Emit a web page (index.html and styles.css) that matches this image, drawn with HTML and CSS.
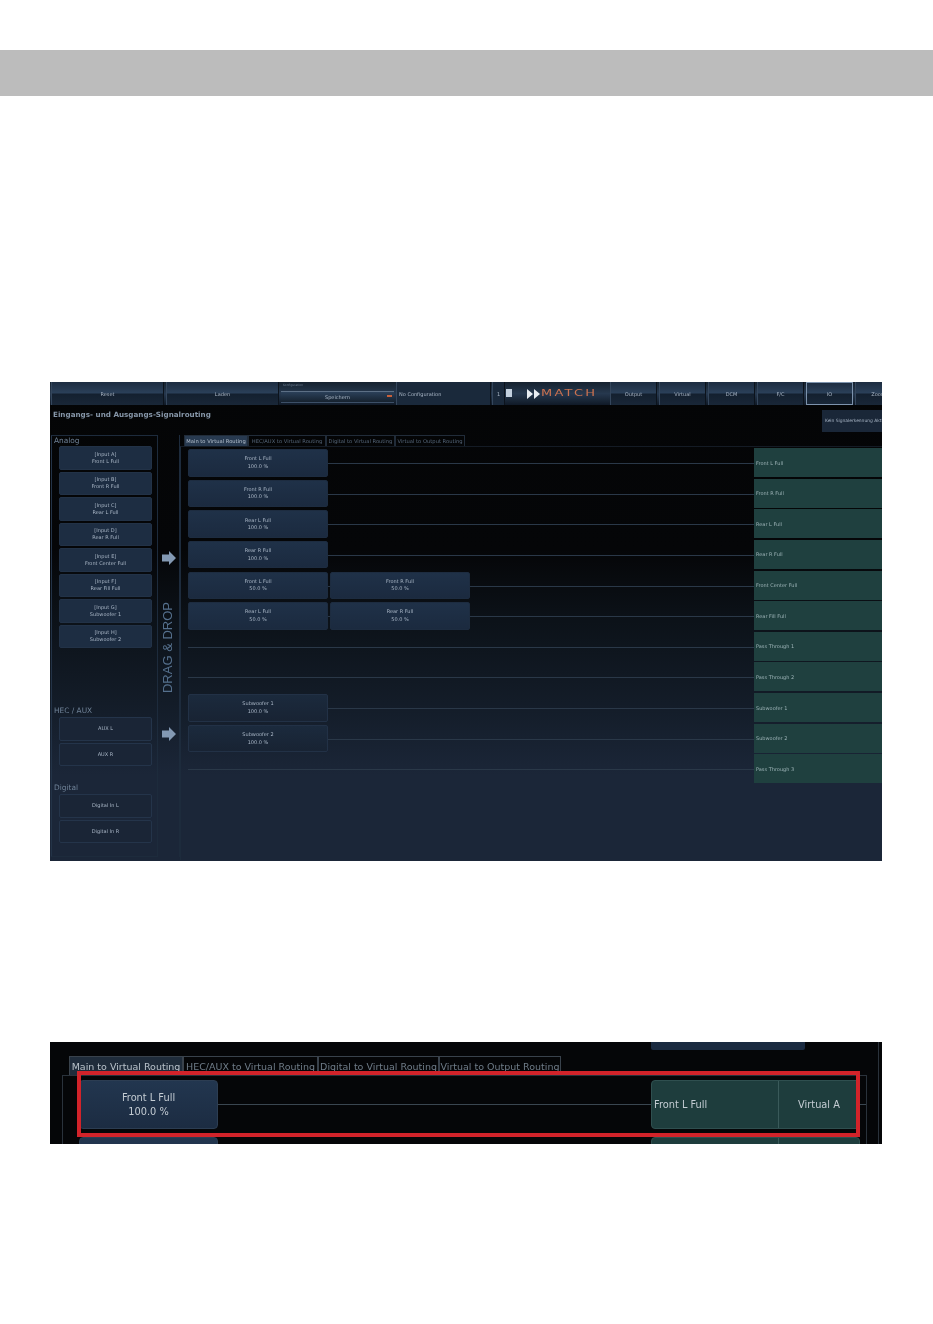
FILE: index.html
```html
<!DOCTYPE html>
<html lang="en">
  <head>
    <meta charset="UTF-8" />
    <title>Signalrouting</title>
    <link rel="stylesheet" href="styles.css">
  </head>
  <body>
    <div class="headerBar"></div>

    <div class="shot shotFull">
      <div class="toolbar">
        <div class="toolBtn wideBtn">Reset</div>
        <div class="toolBtn wideBtn">Laden</div>
        <div class="saveBox">
          <div class="saveLabel">Konfiguration</div>
          <div class="saveField">Speichern<span class="saveMark"></span></div>
        </div>
        <div class="toolBtn configBtn">No Configuration</div>
        <div class="toolBtn numBtn">1</div>
        <div class="fileIcon"></div>
        <div class="logo">
          <svg width="14" height="10" viewBox="0 0 14 10"><path d="M0 0l6 5-6 5zM7 0l6 5-6 5z" fill="#e8edf2"/></svg>
          <span class="logoText">MATCH</span>
        </div>
        <div class="toolBtn navBtn">Output</div>
        <div class="toolBtn navBtn">Virtual</div>
        <div class="toolBtn navBtn">DCM</div>
        <div class="toolBtn navBtn">F/C</div>
        <div class="toolBtn navBtn navActive">IO</div>
        <div class="toolBtn navBtn">Zoom</div>
      </div>

      <div class="titleRow">
        <div class="pageTitle">Eingangs- und Ausgangs-Signalrouting</div>
        <div class="signalBtn">Kein Signalerkennung Aktiv</div>
      </div>

      <div class="workArea">
        <div class="inputPanel">
          <div class="groupLabel">Analog</div>
          <div class="inputList">
            <div class="inputBtn">[Input A]<br>Front L Full</div>
            <div class="inputBtn">[Input B]<br>Front R Full</div>
            <div class="inputBtn">[Input C]<br>Rear L Full</div>
            <div class="inputBtn">[Input D]<br>Rear R Full</div>
            <div class="inputBtn">[Input E]<br>Front Center Full</div>
            <div class="inputBtn">[Input F]<br>Rear Fill Full</div>
            <div class="inputBtn">[Input G]<br>Subwoofer 1</div>
            <div class="inputBtn">[Input H]<br>Subwoofer 2</div>
          </div>
          <div class="groupLabel hecLabel">HEC / AUX</div>
          <div class="inputList">
            <div class="inputBtn dimBtn">AUX L</div>
            <div class="inputBtn dimBtn">AUX R</div>
          </div>
          <div class="groupLabel digitalLabel">Digital</div>
          <div class="inputList">
            <div class="inputBtn dimBtn">Digital In L</div>
            <div class="inputBtn dimBtn">Digital In R</div>
          </div>
        </div>

        <div class="dragColumn">
          <svg class="arrow arrowOne" width="14" height="14" viewBox="0 0 14 14"><path d="M0 3.500h7V0l7 7-7 7v-3.500H0z" fill="#8399b3"/></svg>
          <div class="dragText">DRAG &amp; DROP</div>
          <svg class="arrow arrowTwo" width="14" height="14" viewBox="0 0 14 14"><path d="M0 3.500h7V0l7 7-7 7v-3.500H0z" fill="#8399b3"/></svg>
        </div>

        <div class="routing">
          <div class="tabs">
            <div class="tab tabActive">Main to Virtual Routing</div>
            <div class="tab tabHec">HEC/AUX to Virtual Routing</div>
            <div class="tab tabDig">Digital to Virtual Routing</div>
            <div class="tab tabOut">Virtual to Output Routing</div>
          </div>
          <div class="routePanel">
            <div class="route">
              <div class="source">Front L Full<br>100.0 %</div>
              <div class="target">Front L Full</div>
            </div>
            <div class="route">
              <div class="source">Front R Full<br>100.0 %</div>
              <div class="target">Front R Full</div>
            </div>
            <div class="route">
              <div class="source">Rear L Full<br>100.0 %</div>
              <div class="target">Rear L Full</div>
            </div>
            <div class="route">
              <div class="source">Rear R Full<br>100.0 %</div>
              <div class="target">Rear R Full</div>
            </div>
            <div class="route">
              <div class="source">Front L Full<br>50.0 %</div>
              <div class="source">Front R Full<br>50.0 %</div>
              <div class="target">Front Center Full</div>
            </div>
            <div class="route">
              <div class="source">Rear L Full<br>50.0 %</div>
              <div class="source">Rear R Full<br>50.0 %</div>
              <div class="target">Rear Fill Full</div>
            </div>
            <div class="route">
              <div class="target">Pass Through 1</div>
            </div>
            <div class="route">
              <div class="target">Pass Through 2</div>
            </div>
            <div class="route">
              <div class="source sourceDim">Subwoofer 1<br>100.0 %</div>
              <div class="target">Subwoofer 1</div>
            </div>
            <div class="route">
              <div class="source sourceDim">Subwoofer 2<br>100.0 %</div>
              <div class="target">Subwoofer 2</div>
            </div>
            <div class="route">
              <div class="target">Pass Through 3</div>
            </div>
          </div>
        </div>
      </div>
    </div>

    <div class="shot shotDetail">
      <div class="detailTop"></div>
      <div class="detailTabs">
        <div class="detailTab detailActive">Main to Virtual Routing</div>
        <div class="detailTab detailHec">HEC/AUX to Virtual Routing</div>
        <div class="detailTab detailDig">Digital to Virtual Routing</div>
        <div class="detailTab detailOut">Virtual to Output Routing</div>
      </div>
      <div class="detailPanel">
        <div class="detailRow">
          <div class="detailSource">Front L Full<br>100.0 %</div>
          <div class="detailTarget">
            <div class="detailName">Front L Full</div>
            <div class="detailVirtual">Virtual A</div>
          </div>
        </div>
        <div class="detailRow">
          <div class="detailSource"></div>
          <div class="detailTarget">
            <div class="detailName"></div>
            <div class="detailVirtual"></div>
          </div>
        </div>
      </div>
      <div class="redFrame"></div>
    </div>
  </body>
</html>
```

FILE: styles.css
```css
body {
  margin: 0;
  background: #ffffff;
  font-family: "DejaVu Sans", sans-serif;
}

.headerBar {
  height: 46px;
  margin-top: 50px;
  background: #bcbcbc;
}

.shot {
  width: 832px;
  margin-left: 50px;
  overflow: hidden;
  position: relative;
}

/* full screenshot, soft like the scan */
.shotFull {
  height: 479px;
  margin-top: 286px;
  background: linear-gradient(180deg, #040506 0%, #050608 35%, #0c1219 50%, #131c28 67%, #1b2638 82%, #1b2638 100%);
  color: #a9b6c6;
  font-size: 5px;
  filter: blur(0.55px);
}

.toolbar {
  display: flex;
  height: 23px;
  padding-left: 1px;
  gap: 2px;
  align-items: stretch;
  background: linear-gradient(180deg, #16222f 0%, #26384e 50%, #101a27 100%);
}

.toolBtn {
  display: flex;
  flex-shrink: 0;
  align-items: center;
  justify-content: center;
  background: linear-gradient(180deg, #1d2d41 0%, #2b4059 48%, #14202f 52%, #192738 100%);
  border-left: 1px solid #34465c;
  border-right: 1px solid #0c131c;
  box-sizing: border-box;
}

.wideBtn {
  width: 113px;
}

.saveBox {
  flex-shrink: 0;
  width: 113px;
}

.saveLabel {
  height: 9px;
  font-size: 3px;
  line-height: 6px;
  padding-left: 2px;
  color: #6b7b8e;
}

.saveField {
  height: 10px;
  line-height: 11px;
  text-align: center;
  position: relative;
  border-top: 1px solid #5c6f85;
  border-bottom: 1px solid #3d5068;
  background: linear-gradient(180deg, #2b4059 0%, #16222f 100%);
}

.saveMark {
  position: absolute;
  right: 2px;
  top: 3px;
  width: 5px;
  height: 2px;
  background: #c8603a;
}

.configBtn {
  width: 95px;
  justify-content: flex-start;
  padding-left: 2px;
  background: #1a293b;
}

.numBtn {
  width: 13px;
  margin-left: -1px;
  background: #1a293b;
}

.fileIcon {
  flex-shrink: 0;
  width: 6px;
  height: 8px;
  margin: 7px 0 0 -1px;
  background: #c3d0de;
}

.logo {
  display: flex;
  flex-shrink: 0;
  align-items: center;
  width: 81px;
  margin-left: 13px;
}

.logoText {
  font-size: 13px;
  letter-spacing: 2.2px;
  color: #cc7250;
  transform: scaleY(.62);
}

.navBtn {
  width: 47px;
}

.navActive {
  border: 1px solid #7d93ad;
}

.titleRow {
  display: flex;
  justify-content: space-between;
  height: 25px;
  padding: 5px 0 0 3px;
}

.pageTitle {
  font-size: 7.2px;
  font-weight: bold;
  line-height: 10px;
  color: #8696a8;
}

.signalBtn {
  width: 60px;
  height: 22px;
  line-height: 22px;
  padding-left: 3px;
  box-sizing: border-box;
  white-space: nowrap;
  overflow: hidden;
  background: #1a2738;
  font-size: 4.4px;
}

.workArea {
  display: flex;
  height: 422px;
  padding-left: 1px;
}

.inputPanel {
  width: 107px;
  box-sizing: border-box;
  border: 1px solid #1d2b3c;
  border-left-color: #233347;
}

.groupLabel {
  height: 10px;
  padding-left: 2px;
  font-size: 7.4px;
  line-height: 10px;
  color: #6f8297;
}

.hecLabel {
  margin-top: 58px;
  height: 11px;
}

.digitalLabel {
  margin-top: 17px;
  height: 11px;
}

.inputList {
  display: flex;
  flex-direction: column;
  gap: 2px;
  padding-left: 7px;
}

.inputBtn {
  display: flex;
  align-items: center;
  justify-content: center;
  width: 93px;
  height: 23.5px;
  box-sizing: border-box;
  text-align: center;
  line-height: 7px;
  border-radius: 2px;
  background: #1d2d42;
  border: 1px solid #223247;
}

.dimBtn {
  background: #1a2536;
  border-color: #24344a;
}

.dragColumn {
  position: relative;
  width: 22px;
  box-sizing: border-box;
  border-right: 1px solid #1d2b3c;
}

.arrow {
  position: absolute;
  left: 4px;
}

.arrowOne {
  top: 116px;
}

.arrowTwo {
  top: 292px;
}

.dragText {
  position: absolute;
  left: 2px;
  top: 167px;
  writing-mode: vertical-rl;
  transform: rotate(180deg);
  font-family: "Liberation Sans", sans-serif;
  font-size: 13px;
  line-height: 15px;
  white-space: nowrap;
  color: #55708d;
}

.routing {
  flex: 1;
  min-width: 0;
}

.tabs {
  display: flex;
  height: 11px;
  padding-left: 4px;
}

.tab {
  box-sizing: border-box;
  width: 64px;
  font-size: 5.2px;
  line-height: 10px;
  text-align: center;
  white-space: nowrap;
  color: #56677a;
  border: 1px solid #212c39;
  border-bottom: 0;
}

.tabActive {
  background: #283a50;
  color: #b4c0ce;
}

.tabHec {
  width: 78px;
}

.tabDig {
  width: 69px;
}

.tabOut {
  width: 70px;
}

.routePanel {
  height: 411px;
  padding: 2px 0 0 7px;
  border-left: 1px solid #1d2b3c;
  border-top: 1px solid #141b25;
}

.route {
  display: flex;
  gap: 2px;
  height: 30.65px;
  background: linear-gradient(#2a3848, #2a3848) 0 14px / 100% 1px no-repeat;
}

.source {
  display: flex;
  align-items: center;
  justify-content: center;
  width: 140px;
  height: 27.5px;
  box-sizing: border-box;
  text-align: center;
  line-height: 7.5px;
  border-radius: 2px;
  background: linear-gradient(180deg, #1f3148 0%, #1b2a3f 100%);
  border: 1px solid #1d2c40;
}

.sourceDim {
  background: linear-gradient(180deg, #1b2a3d 0%, #182333 100%);
  border-color: #223146;
}

.target {
  display: flex;
  align-items: center;
  width: 128px;
  height: 29px;
  margin-top: -1px;
  margin-left: auto;
  padding-left: 2px;
  box-sizing: border-box;
  background: #1f403f;
  color: #9db3b7;
}

/* zoomed detail */
.shotDetail {
  height: 102px;
  margin-top: 181px;
  background: linear-gradient(#2a323b, #2a323b) 828px 0 / 1px 100% no-repeat, #050608;
  font-size: 9.8px;
  color: #c4ccd3;
  filter: blur(0.25px);
}

.detailTop {
  width: 154px;
  height: 8px;
  margin-left: 601px;
  background: #1a2a40;
  border-radius: 0 0 2px 2px;
}

.detailTabs {
  display: flex;
  height: 19px;
  margin: 6px 0 0 19px;
  font-size: 9.5px;
}

.detailTab {
  box-sizing: border-box;
  width: 114px;
  line-height: 20px;
  text-align: center;
  white-space: nowrap;
  color: #6f7c88;
  border: 1px solid #39424c;
  border-bottom: 0;
}

.detailActive {
  color: #b9c2ca;
  background: #1f2c3b;
}

.detailHec {
  width: 135px;
}

.detailDig {
  width: 121px;
}

.detailOut {
  width: 122px;
}

.detailPanel {
  width: 805px;
  margin-left: 12px;
  padding: 4px 0 0 16px;
  box-sizing: border-box;
  border-left: 1px solid #2a323b;
  border-right: 1px solid #2a323b;
  border-top: 1px solid #2a323b;
}

.detailRow {
  display: flex;
  height: 57px;
  background: linear-gradient(#3a4650, #3a4650) 0 24px / 100% 1px no-repeat;
}

.detailSource {
  width: 139px;
  height: 49px;
  box-sizing: border-box;
  padding-top: 10px;
  text-align: center;
  line-height: 14px;
  border-radius: 4px;
  border: 1px solid #2c3d52;
  background: linear-gradient(180deg, #22364f 0%, #1c2c42 100%);
}

.detailTarget {
  display: flex;
  width: 209px;
  height: 49px;
  margin-left: auto;
  margin-right: 6px;
  border-radius: 4px;
  background: #1e3d3d;
  border: 1px solid #2f4f4f;
  box-sizing: border-box;
  align-items: center;
}

.detailName {
  width: 127px;
  height: 100%;
  line-height: 47px;
  padding-left: 2px;
  box-sizing: border-box;
  border-right: 1px solid #3a5a5a;
}

.detailVirtual {
  flex: 1;
  text-align: center;
}

.redFrame {
  position: absolute;
  left: 27px;
  top: 29px;
  width: 783px;
  height: 66px;
  box-sizing: border-box;
  border: 4.5px solid #d2232a;
}
```
